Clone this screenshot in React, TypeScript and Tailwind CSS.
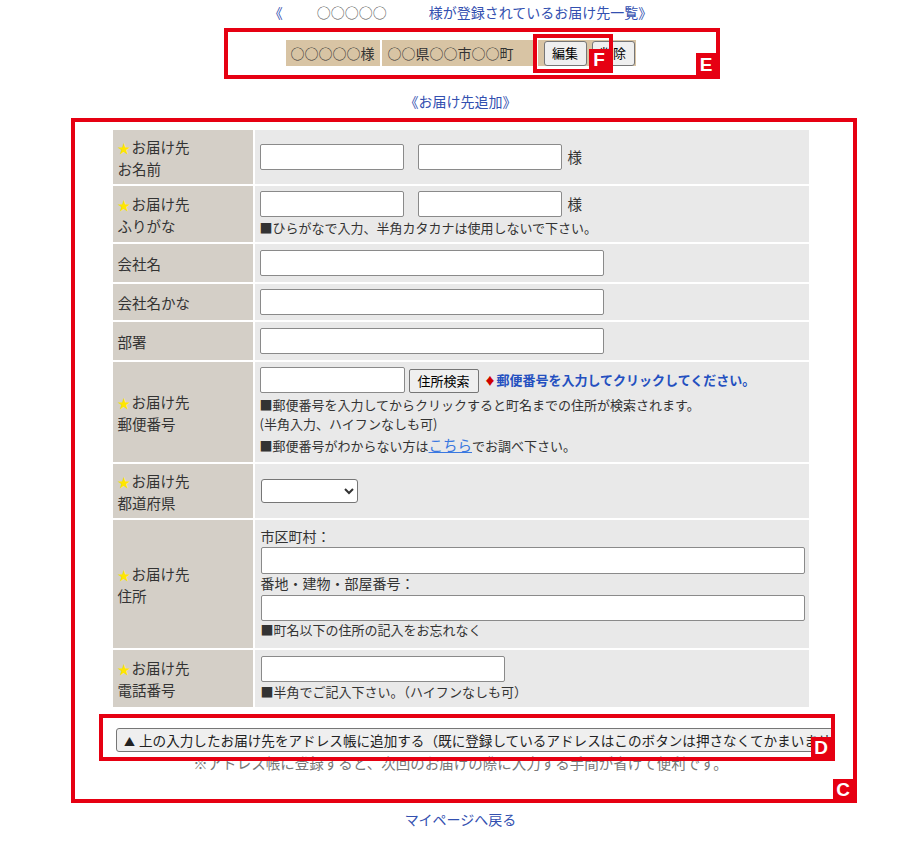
import React from "react";

const FONT = { fontFamily: '"Noto Sans CJK JP", "Noto Sans", sans-serif' };

function Star() {
  return <span className="text-[#ffe600] text-[13px] mr-[1px]">★</span>;
}

function Label({ lines, star = true }: { lines: string[]; star?: boolean }) {
  return (
    <div className="bg-[#d4cfc7] px-[5px] flex flex-col justify-center text-[14.5px] leading-[21px] text-[#333]">
      {lines.map((l, i) => (
        <div key={i} className="whitespace-nowrap">
          {i === 0 && star ? <Star /> : null}
          {l}
        </div>
      ))}
    </div>
  );
}

function Input({ w, h = 26 }: { w: string; h?: number }) {
  return (
    <input
      type="text"
      className={`${w} bg-white border border-[#8a8a8a] rounded-[2px] outline-none`}
      style={{ height: h }}
    />
  );
}

function Box({
  left,
  top,
  width,
  height,
  letter,
  tw,
  th,
}: {
  left: number;
  top: number;
  width: number;
  height: number;
  letter: string;
  tw: number;
  th: number;
}) {
  return (
    <div
      className="absolute border-4 border-[#e60012] pointer-events-none"
      style={{ left, top, width, height }}
    >
      <div
        className="absolute right-0 bottom-0 bg-[#e60012] text-white font-bold flex items-center justify-center text-[19px] leading-none"
        style={{ width: tw, height: th, fontFamily: '"Liberation Sans", Arial, sans-serif' }}
      >
        {letter}
      </div>
    </div>
  );
}

export default function App() {
  return (
    <div className="relative w-[921px] h-[851px] bg-white text-[#333]" style={FONT}>
      {/* Top line */}
      <div className="mt-[2px] text-center text-[14px] leading-[20px] text-[#3350b0]">
        <span>《</span>
        <span className="ml-[34px] text-[#555]">○○○○○</span>
        <span className="ml-[42px]">様が登録されているお届け先一覧》</span>
      </div>

      {/* Registered address row */}
      <div className="mt-[18px] flex justify-center">
        <div className="flex gap-[2px] h-[26px] text-[14px]">
          <div className="bg-[#d8c4a4] w-[94px] flex items-center justify-center">○○○○○様</div>
          <div className="bg-[#d8c4a4] w-[154px] flex items-center pl-[6px]">○○県○○市○○町</div>
          <div className="bg-[#d8c4a4] w-[98px] flex items-center gap-[5px] pl-[6px]">
            <button className="h-[25px] w-[43px] bg-[#efefef] border border-[#767676] rounded-[3px] text-[13px] text-black">
              編集
            </button>
            <button className="h-[25px] w-[43px] bg-[#efefef] border border-[#767676] rounded-[3px] text-[13px] text-black">
              削除
            </button>
          </div>
        </div>
      </div>

      {/* Add link */}
      <div className="mt-[25px] text-center text-[14px] leading-[20px] text-[#3350b0]">《お届け先追加》</div>

      {/* Form table */}
      <div className="mt-[19px] flex justify-center">
        <div className="grid grid-cols-[140px_554px] gap-[2px] w-[696px]">
          {/* Row 1 */}
          <Label lines={["お届け先", "お名前"]} />
          <div className="bg-[#e9e9e9] h-[54px] flex items-center pl-[5px]">
            <Input w="w-[144px]" />
            <span className="ml-[14px]" />
            <Input w="w-[144px]" />
            <span className="ml-[6px] text-[14.5px]">様</span>
          </div>

          {/* Row 2 */}
          <Label lines={["お届け先", "ふりがな"]} />
          <div className="bg-[#e9e9e9] h-[56px] pl-[5px] pt-[5px]">
            <div className="flex items-center">
              <Input w="w-[144px]" />
              <span className="ml-[14px]" />
              <Input w="w-[144px]" />
              <span className="ml-[6px] text-[14.5px]">様</span>
            </div>
            <div className="text-[13px] leading-[19px] mt-[1px]">■ひらがなで入力、半角カタカナは使用しないで下さい。</div>
          </div>

          {/* Row 3 */}
          <Label lines={["会社名"]} star={false} />
          <div className="bg-[#e9e9e9] h-[38px] flex items-center pl-[5px]">
            <Input w="w-[344px]" />
          </div>

          {/* Row 4 */}
          <Label lines={["会社名かな"]} star={false} />
          <div className="bg-[#e9e9e9] h-[36px] flex items-center pl-[5px]">
            <Input w="w-[344px]" />
          </div>

          {/* Row 5 */}
          <Label lines={["部署"]} star={false} />
          <div className="bg-[#e9e9e9] h-[38px] flex items-center pl-[5px]">
            <Input w="w-[344px]" />
          </div>

          {/* Row 6 */}
          <Label lines={["お届け先", "郵便番号"]} />
          <div className="bg-[#e9e9e9] h-[100px] pl-[5px] pt-[5px] text-[13px]">
            <div className="flex items-center">
              <Input w="w-[145px]" />
              <button className="ml-[4px] mt-[2px] h-[24px] w-[70px] bg-[#efefef] border border-[#767676] rounded-[2px] text-[13px] text-black">
                住所検索
              </button>
              <span className="ml-[6px] text-[#d00000] text-[11px]">♦</span>
              <span className="ml-[1px] font-bold text-[#2450c0]">郵便番号を入力してクリックしてください。</span>
            </div>
            <div className="leading-[19px] mt-[2px]">■郵便番号を入力してからクリックすると町名までの住所が検索されます。</div>
            <div className="leading-[19px]">(半角入力、ハイフンなしも可)</div>
            <div className="leading-[22px] mt-[1px]">
              ■郵便番号がわからない方は
              <a className="text-[#3a78e0] underline text-[14.5px]">こちら</a>
              でお調べ下さい。
            </div>
          </div>

          {/* Row 7 */}
          <Label lines={["お届け先", "都道府県"]} />
          <div className="bg-[#e9e9e9] h-[54px] flex items-center pl-[6px]">
            <select className="w-[97px] h-[24px] bg-white border border-[#767676] rounded-[3px] text-[13px]">
              <option></option>
            </select>
          </div>

          {/* Row 8 */}
          <Label lines={["お届け先", "住所"]} />
          <div className="bg-[#e9e9e9] h-[128px] pl-[6px] pr-[4px] pt-[7px] text-[13px]">
            <div className="leading-[18px] text-[14px]">市区町村：</div>
            <div className="mt-[2px]">
              <Input w="w-[544px]" h={27} />
            </div>
            <div className="leading-[18px] text-[14px]">番地・建物・部屋番号：</div>
            <div className="mt-[3px]">
              <Input w="w-[544px]" h={26} />
            </div>
            <div className="leading-[18px]">■町名以下の住所の記入をお忘れなく</div>
          </div>

          {/* Row 9 */}
          <Label lines={["お届け先", "電話番号"]} />
          <div className="bg-[#e9e9e9] h-[57px] pl-[6px] pt-[6px] text-[13px]">
            <Input w="w-[244px]" />
            <div className="leading-[18px] mt-[1px]">■半角でご記入下さい。（ハイフンなしも可）</div>
          </div>
        </div>
      </div>

      {/* Add-to-address-book button */}
      <div className="mt-[20px] pl-[116px]">
        <button className="w-[718px] h-[24px] overflow-hidden whitespace-nowrap text-left pl-[7px] text-[13.6px] leading-[22px] bg-[#efefef] border border-[#767676] rounded-[3px] text-[#222]">
          <span className="text-[11px] mr-[4px]">▲</span>
          上の入力したお届け先をアドレス帳に追加する（既に登録しているアドレスはこのボタンは押さなくてかまいません）
        </button>
      </div>
      <div className="mt-[1px] text-center text-[14.5px] leading-[20px] text-[#777]">
        ※アドレス帳に登録すると、次回のお届けの際に入力する手間が省けて便利です。
      </div>

      {/* Back link */}
      <div className="mt-[36px] text-center text-[14px] leading-[20px] text-[#3350b0]">マイページへ戻る</div>

      {/* Annotation overlays */}
      <Box left={224} top={26} width={496} height={51} letter="E" tw={20} th={22} />
      <Box left={533} top={32} width={80} height={39} letter="F" tw={20} th={20} />
      <Box left={71} top={116} width={786} height={685} letter="C" tw={20} th={20} />
      <Box left={99} top={712} width={736} height={47} letter="D" tw={20} th={20} />
    </div>
  );
}
